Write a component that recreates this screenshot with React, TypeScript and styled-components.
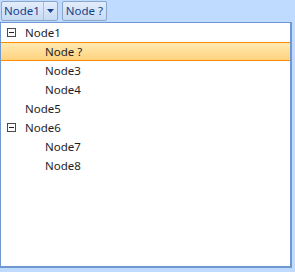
import styled, { createGlobalStyle } from 'styled-components';

const GlobalStyle = createGlobalStyle`
  html, body {
    margin: 0;
    padding: 0;
    background: #bfdbff;
  }
  body {
    font-family: 'Segoe UI', 'Noto Sans', 'Open Sans', sans-serif;
    font-size: 11.5px;
  }
`;

type TreeNode = {
  label: string;
  level: number;
  expandable?: boolean;
  selected?: boolean;
};

const nodes: TreeNode[] = [
  { label: 'Node1', level: 0, expandable: true },
  { label: 'Node ?', level: 1, selected: true },
  { label: 'Node3', level: 1 },
  { label: 'Node4', level: 1 },
  { label: 'Node5', level: 0 },
  { label: 'Node6', level: 0, expandable: true },
  { label: 'Node7', level: 1 },
  { label: 'Node8', level: 1 },
];

const App = () => {
  return (
    <Wrapper>
      <GlobalStyle />
      <Toolbar>
        <SplitButton>
          <SplitMain>Node1</SplitMain>
          <SplitArrow>
            <svg width="7" height="4" viewBox="0 0 7 4">
              <path d="M0 0h7L3.5 4z" fill="#15428b" />
            </svg>
          </SplitArrow>
        </SplitButton>
        <Button>Node ?</Button>
      </Toolbar>
      <Tree>
        {nodes.map((node) => (
          <Row key={node.label} selected={node.selected}>
            <Expander level={node.level}>
              {node.expandable && (
                <svg width="9" height="9" viewBox="0 0 9 9">
                  <rect x="0.5" y="0.5" width="8" height="8" fill="none" stroke="#4a4a4a" />
                  <path d="M2 4.5h5" stroke="#222" />
                </svg>
              )}
            </Expander>
            <Label>{node.label}</Label>
          </Row>
        ))}
      </Tree>
    </Wrapper>
  );
};
export default App;

const Wrapper = styled.div`
  width: 295px;
  height: 272px;
  display: flex;
  flex-direction: column;
  background: #bfdbff;
  overflow: hidden;
`;

const Toolbar = styled.div`
  height: 22px;
  display: flex;
  align-items: flex-start;
  gap: 4px;
  padding: 1px 0 0 1px;
  box-sizing: border-box;
`;

const SplitButton = styled.div`
  display: flex;
  height: 20px;
  border: 1px solid #8ba6cc;
  border-radius: 2px;
  box-sizing: border-box;
  background: linear-gradient(#e3edfb, #c7daf3);
  color: #15428b;
`;

const SplitMain = styled.div`
  padding: 0 3px 0 2px;
  line-height: 18px;
  border-right: 1px solid #a6bfe0;
`;

const SplitArrow = styled.div`
  width: 13px;
  display: flex;
  align-items: center;
  justify-content: center;
`;

const Button = styled.div`
  height: 20px;
  line-height: 18px;
  padding: 0 3px;
  border: 1px solid #8ba6cc;
  border-radius: 2px;
  box-sizing: border-box;
  background: linear-gradient(#e3edfb, #c7daf3);
  color: #15428b;
`;

const Tree = styled.div`
  width: 292px;
  height: 246px;
  box-sizing: border-box;
  background: #fff;
  border: 1px solid #6f98d0;
  border-right-width: 2px;
  border-bottom-width: 2px;
`;

const Row = styled.div<{ selected?: boolean }>`
  height: 19px;
  display: flex;
  align-items: center;
  box-sizing: border-box;
  color: #1e1e1e;
  ${(p) =>
    p.selected
      ? `
    border-top: 1px solid #ff8a00;
    border-bottom: 1px solid #ff8a00;
    background: linear-gradient(#ffeab2, #ffd27d);
  `
      : ''}
`;

const Expander = styled.div<{ level: number }>`
  width: 9px;
  height: 9px;
  margin-left: ${(p) => 6 + p.level * 20}px;
  margin-right: 9px;
  display: flex;
`;

const Label = styled.span`
  line-height: 17px;
`;
